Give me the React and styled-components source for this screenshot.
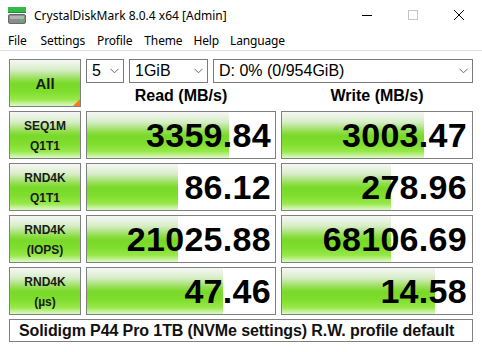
import React from "react";
import styled, { createGlobalStyle } from "styled-components";

const Global = createGlobalStyle`
  html, body { margin: 0; padding: 0; background: #fff; }
  body { width: 482px; height: 352px; overflow: hidden; }
`;

const GREEN = `linear-gradient(to bottom, #f7f7f7 0%, #d6edc6 22%, #93de50 42%, #78d928 52%, #80de2e 70%, #98e84c 86%, #dff9cc 100%)`;

const Window = styled.div`
  width: 482px;
  height: 352px;
  background: #fff;
  font-family: "Liberation Sans", Arial, sans-serif;
  color: #000;
`;

const TitleBar = styled.div`
  height: 30px;
  display: flex;
  align-items: center;
  padding-left: 8px;
  font-family: "Noto Sans", "Open Sans", sans-serif;
  font-size: 12px;
`;

const Title = styled.span`
  margin-left: 8px;
  flex: 1;
`;

const WinButton = styled.div`
  width: 46px;
  height: 30px;
  display: flex;
  align-items: center;
  justify-content: center;
`;

const MenuBar = styled.div`
  height: 20px;
  display: flex;
  align-items: center;
  padding-left: 8px;
  font-family: "Noto Sans", "Open Sans", sans-serif;
  font-size: 12px;
  letter-spacing: -0.15px;
  border-bottom: 1px solid #e2e2e2;
`;

const MenuItem = styled.span`
  margin-right: ${(p) => p.gap}px;
`;

const Main = styled.div`
  padding: 8px 9px 0 9px;
  display: flex;
  flex-direction: column;
  gap: 4px;
`;

const TopRow = styled.div`
  display: grid;
  grid-template-columns: 72px 387px;
  column-gap: 5px;
  height: 48px;
`;

const Shiny = styled.div`
  box-sizing: border-box;
  border: 1px solid #808080;
  background: ${GREEN};
  color: #1a1a1a;
  font-weight: bold;
  display: flex;
  flex-direction: column;
  align-items: center;
  justify-content: center;
`;

const AllButton = styled(Shiny)`
  position: relative;
  font-size: 15px;
  &::after {
    content: "";
    position: absolute;
    right: 0;
    bottom: 0;
    border-style: solid;
    border-width: 0 0 7px 7px;
    border-color: transparent transparent #ff7a10 transparent;
  }
`;

const RightTop = styled.div`
  display: flex;
  flex-direction: column;
`;

const Selects = styled.div`
  display: flex;
  gap: 5px;
  height: 24px;
`;

const Select = styled.div`
  box-sizing: border-box;
  width: ${(p) => p.w}px;
  height: 24px;
  border: 1px solid #7a7a7a;
  background: #fff;
  display: flex;
  align-items: center;
  justify-content: space-between;
  padding: 0 4px 0 5px;
  font-size: 16px;
`;

const Headers = styled.div`
  display: grid;
  grid-template-columns: 190px 192px;
  column-gap: 5px;
  height: 24px;
`;

const Header = styled.div`
  text-align: center;
  font-weight: bold;
  font-size: 16px;
  line-height: 26px;
`;

const Row = styled.div`
  display: grid;
  grid-template-columns: 72px 190px 192px;
  column-gap: 5px;
  height: 48px;
`;

const Label = styled(Shiny)`
  font-size: 12px;
  line-height: 20px;
  padding-top: 1px;
`;

const Cell = styled.div`
  box-sizing: border-box;
  border: 1px solid #808080;
  background-color: #fff;
  background-image: ${GREEN};
  background-repeat: no-repeat;
  display: flex;
  align-items: center;
  justify-content: flex-end;
  padding-right: ${(p) => p.pr}px;
  font-weight: bold;
  font-size: 34px;
  letter-spacing: 0.3px;
`;

const Comment = styled.div`
  box-sizing: border-box;
  height: 23px;
  width: 464px;
  border: 1px solid #808080;
  display: flex;
  align-items: center;
  padding-left: 9px;
  font-weight: bold;
  font-size: 16px;
  letter-spacing: -0.1px;
  color: #111;
`;

const Chevron = () => (
  <svg width="9" height="6" viewBox="0 0 9 6">
    <path d="M0.5 0.8 L4.5 4.8 L8.5 0.8" fill="none" stroke="#6a6a6a" strokeWidth="1" />
  </svg>
);

const AppIcon = () => (
  <svg width="18" height="17" viewBox="0 0 18 17">
    <rect x="0" y="0" width="18" height="5" fill="#33b84a" />
    <rect x="0" y="5" width="18" height="1" fill="#1d8f32" />
    <rect x="0.5" y="7.5" width="17" height="9" rx="1.5" fill="#8c8c8c" stroke="#6a6a6a" />
    <rect x="2" y="9" width="14" height="3" fill="#b3b3b3" />
    <rect x="12" y="12" width="3" height="2" fill="#3cd04a" />
  </svg>
);

const rows = [
  { l1: "SEQ1M", l2: "Q1T1", read: "3359.84", rw: 142, write: "3003.47", ww: 142 },
  { l1: "RND4K", l2: "Q1T1", read: "86.12", rw: 91, write: "278.96", ww: 109 },
  { l1: "RND4K", l2: "(IOPS)", read: "21025.88", rw: 91, write: "68106.69", ww: 109 },
  { l1: "RND4K", l2: "(\u00b5s)", read: "47.46", rw: 136, write: "14.58", ww: 153 },
];

const menus = [
  ["File", 14],
  ["Settings", 12],
  ["Profile", 12],
  ["Theme", 11],
  ["Help", 11],
  ["Language", 0],
];

export default function App() {
  return (
    <Window>
      <Global />
      <TitleBar>
        <AppIcon />
        <Title>CrystalDiskMark 8.0.4 x64 [Admin]</Title>
        <WinButton>
          <svg width="10" height="10"><rect x="0" y="5" width="10" height="1" fill="#000" /></svg>
        </WinButton>
        <WinButton>
          <svg width="10" height="10"><rect x="0.5" y="0.5" width="9" height="9" fill="none" stroke="#c4c4c4" /></svg>
        </WinButton>
        <WinButton>
          <svg width="10" height="10"><path d="M0 0 L10 10 M10 0 L0 10" stroke="#000" strokeWidth="1" /></svg>
        </WinButton>
      </TitleBar>
      <MenuBar>
        {menus.map(([m, g]) => (
          <MenuItem key={m} gap={g}>{m}</MenuItem>
        ))}
      </MenuBar>
      <Main>
        <TopRow>
          <AllButton>All</AllButton>
          <RightTop>
            <Selects>
              <Select w={38}>5<Chevron /></Select>
              <Select w={79}>1GiB<Chevron /></Select>
              <Select w={260}>D: 0% (0/954GiB)<Chevron /></Select>
            </Selects>
            <Headers>
              <Header>Read (MB/s)</Header>
              <Header>Write (MB/s)</Header>
            </Headers>
          </RightTop>
        </TopRow>
        {rows.map((r, i) => (
          <Row key={i}>
            <Label>
              <span>{r.l1}</span>
              <span>{r.l2}</span>
            </Label>
            <Cell pr={4} style={{ backgroundSize: `${r.rw}px 100%` }}>{r.read}</Cell>
            <Cell pr={5} style={{ backgroundSize: `${r.ww}px 100%` }}>{r.write}</Cell>
          </Row>
        ))}
        <Comment>Solidigm P44 Pro 1TB (NVMe settings) R.W. profile default</Comment>
      </Main>
    </Window>
  );
}
